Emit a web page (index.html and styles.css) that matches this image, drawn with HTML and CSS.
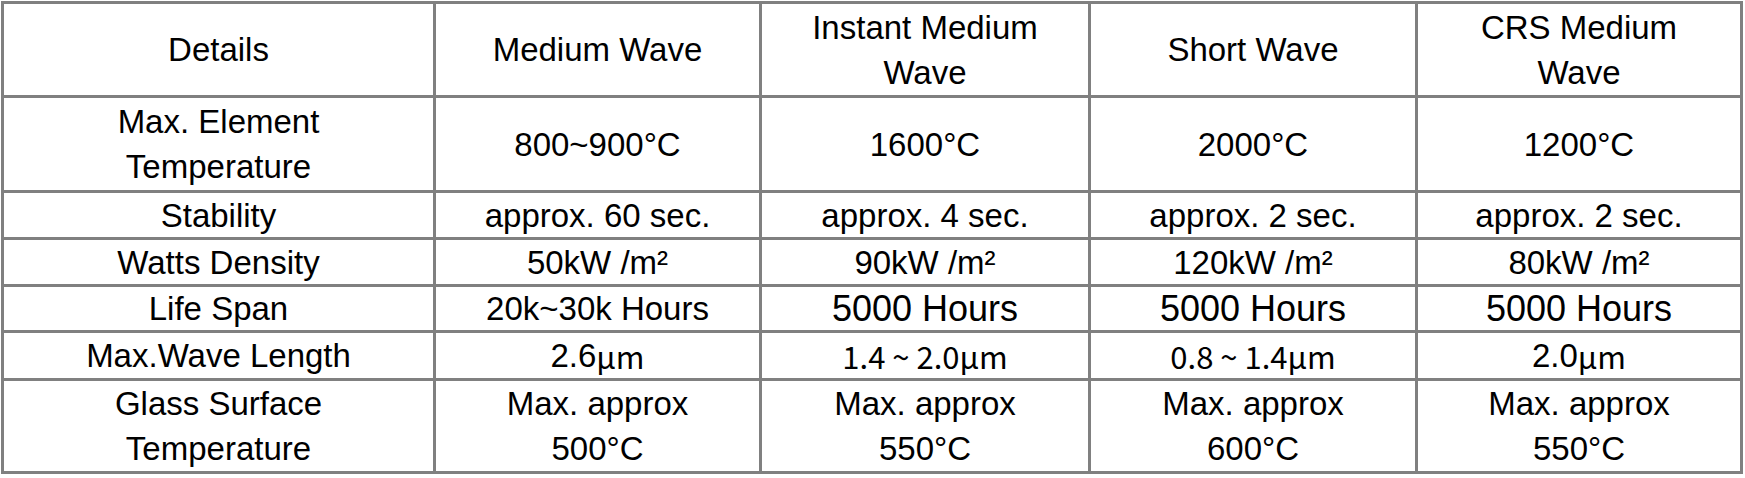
FILE: index.html
```html
<!DOCTYPE html>
<html>
<head>
<meta charset="utf-8">
<link rel="stylesheet" href="styles.css">
</head>
<body>
<div class="spec-table">
  <div class="cell">Details</div>
  <div class="cell">Medium Wave</div>
  <div class="cell">Instant Medium<br>Wave</div>
  <div class="cell">Short Wave</div>
  <div class="cell">CRS Medium<br>Wave</div>

  <div class="cell">Max. Element<br>Temperature</div>
  <div class="cell">800~900°C</div>
  <div class="cell">1600°C</div>
  <div class="cell">2000°C</div>
  <div class="cell">1200°C</div>

  <div class="cell">Stability</div>
  <div class="cell">approx. 60 sec.</div>
  <div class="cell">approx. 4 sec.</div>
  <div class="cell">approx. 2 sec.</div>
  <div class="cell">approx. 2 sec.</div>

  <div class="cell">Watts Density</div>
  <div class="cell">50kW /m²</div>
  <div class="cell">90kW /m²</div>
  <div class="cell">120kW /m²</div>
  <div class="cell">80kW /m²</div>

  <div class="cell">Life Span</div>
  <div class="cell">20k~30k Hours</div>
  <div class="cell big">5000 Hours</div>
  <div class="cell big">5000 Hours</div>
  <div class="cell big">5000 Hours</div>

  <div class="cell">Max.Wave Length</div>
  <div class="cell">2.6<span class="cjk">μm</span></div>
  <div class="cell cjk">1.4 ~ 2.0μm</div>
  <div class="cell cjk">0.8 ~ 1.4μm</div>
  <div class="cell">2.0<span class="cjk">μm</span></div>

  <div class="cell">Glass Surface<br>Temperature</div>
  <div class="cell">Max. approx<br>500°C</div>
  <div class="cell">Max. approx<br>550°C</div>
  <div class="cell">Max. approx<br>600°C</div>
  <div class="cell">Max. approx<br>550°C</div>
</div>
</body>
</html>
```
FILE: styles.css
```css
html, body {
  margin: 0;
  padding: 0;
  background: #ffffff;
}

body {
  padding: 1px 0 0 1px;
}

.spec-table {
  display: grid;
  grid-template-columns: 432px 326px 329px 327px 325px;
  grid-template-rows: 94px 95px 47px 47px 46px 48px 93px;
  width: max-content;
  border-left: 3px solid #808080;
  border-top: 3px solid #808080;
  font-family: "Liberation Sans", Arial, sans-serif;
  font-size: 33px;
  color: #000;
}

.cell {
  display: flex;
  align-items: center;
  justify-content: center;
  text-align: center;
  border-right: 3px solid #808080;
  border-bottom: 3px solid #808080;
  line-height: 45px;
  overflow: hidden;
}

.big {
  font-size: 36px;
}

.cjk {
  font-family: "Noto Sans CJK TC", "Noto Sans", sans-serif;
  font-size: 31px;
}
```
